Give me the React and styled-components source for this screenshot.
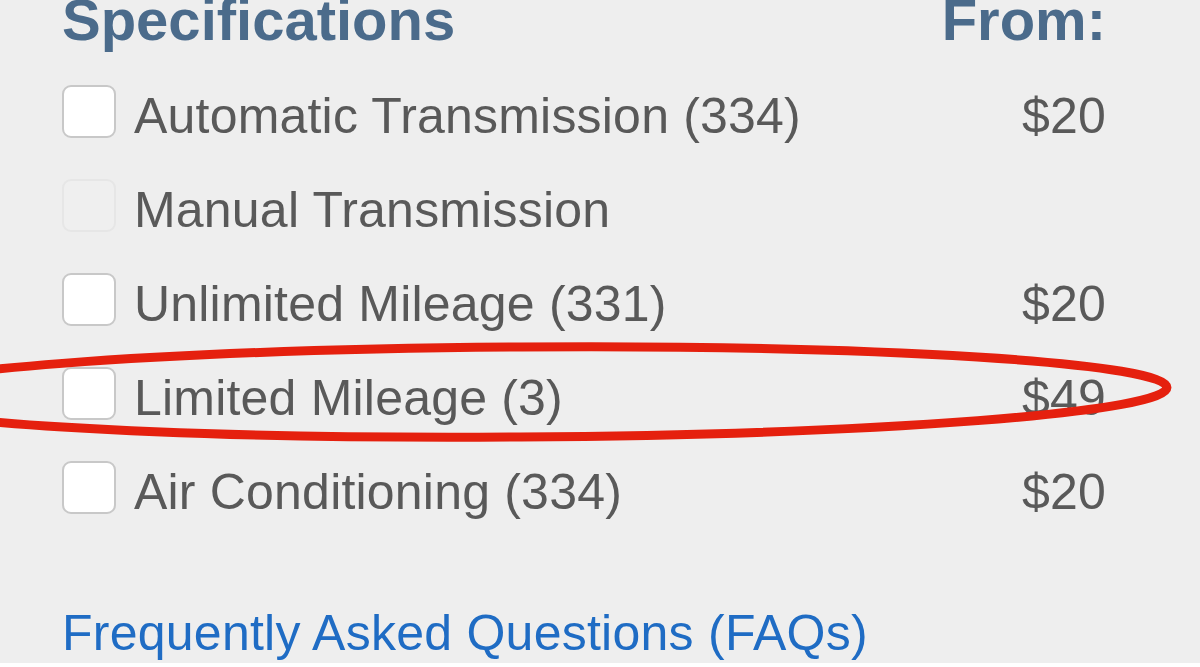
import styled, { createGlobalStyle } from "styled-components";

const GlobalStyle = createGlobalStyle`
  html, body {
    margin: 0;
    padding: 0;
    background: #ffffff;
  }
  body {
    font-family: "Liberation Sans", Arial, Helvetica, sans-serif;
    overflow: hidden;
  }
`;

const Page = styled.main`
  position: relative;
  height: 663px;
  background-color: #eeeeee;
  padding: 0 94px 0 62px;
  box-sizing: border-box;
  overflow: hidden;
`;

const Header = styled.div`
  display: flex;
  justify-content: space-between;
  margin-top: -9px;
  margin-bottom: 20px;
  font-size: 58px;
  line-height: 58px;
  font-weight: 700;
  color: #4b6b8b;
`;

const List = styled.ul`
  list-style: none;
  margin: 0;
  padding: 0;
`;

const Row = styled.li`
  display: flex;
  align-items: flex-start;
  height: 94px;
  font-size: 50px;
  line-height: 94px;
  letter-spacing: 0.2px;
  color: #595959;
`;

const Box = styled.span`
  flex: none;
  width: 54px;
  height: 53px;
  margin-top: 16px;
  margin-right: 18px;
  box-sizing: border-box;
  border-radius: 9px;
  border: 2px solid ${(p) => (p.$disabled ? "#e6e6e6" : "#c8c8c8")};
  background: ${(p) => (p.$disabled ? "#efefef" : "#ffffff")};
`;

const Label = styled.span`
  flex: 1;
  white-space: nowrap;
`;

const Price = styled.span`
  white-space: nowrap;
`;

const FaqLink = styled.a`
  display: block;
  margin-top: 64px;
  font-size: 50px;
  line-height: 60px;
  letter-spacing: 0.25px;
  color: #1f6cc4;
  text-decoration: none;
  white-space: nowrap;
`;

const Mark = styled.svg`
  position: absolute;
  left: 0;
  top: 0;
  width: 1200px;
  height: 663px;
  pointer-events: none;
`;

const specs = [
  { label: "Automatic Transmission (334)", price: "$20" },
  { label: "Manual Transmission", disabled: true },
  { label: "Unlimited Mileage (331)", price: "$20" },
  { label: "Limited Mileage (3)", price: "$49" },
  { label: "Air Conditioning (334)", price: "$20" },
];

export default function App() {
  return (
    <>
      <GlobalStyle />
      <Page>
        <Header>
          <span>Specifications</span>
          <span>From:</span>
        </Header>

        <List>
          {specs.map((s) => (
            <Row key={s.label}>
              <Box $disabled={s.disabled} />
              <Label>{s.label}</Label>
              {s.price && <Price>{s.price}</Price>}
            </Row>
          ))}
        </List>

        <FaqLink href="#">Frequently Asked Questions (FAQs)</FaqLink>

        {/* hand-drawn highlight round the limited mileage row */}
        <Mark viewBox="0 0 1200 663">
          <ellipse
            cx="520"
            cy="392"
            rx="647"
            ry="45"
            fill="none"
            stroke="#e5200e"
            strokeWidth="9"
            transform="rotate(-0.4 520 392)"
          />
        </Mark>
      </Page>
    </>
  );
}
